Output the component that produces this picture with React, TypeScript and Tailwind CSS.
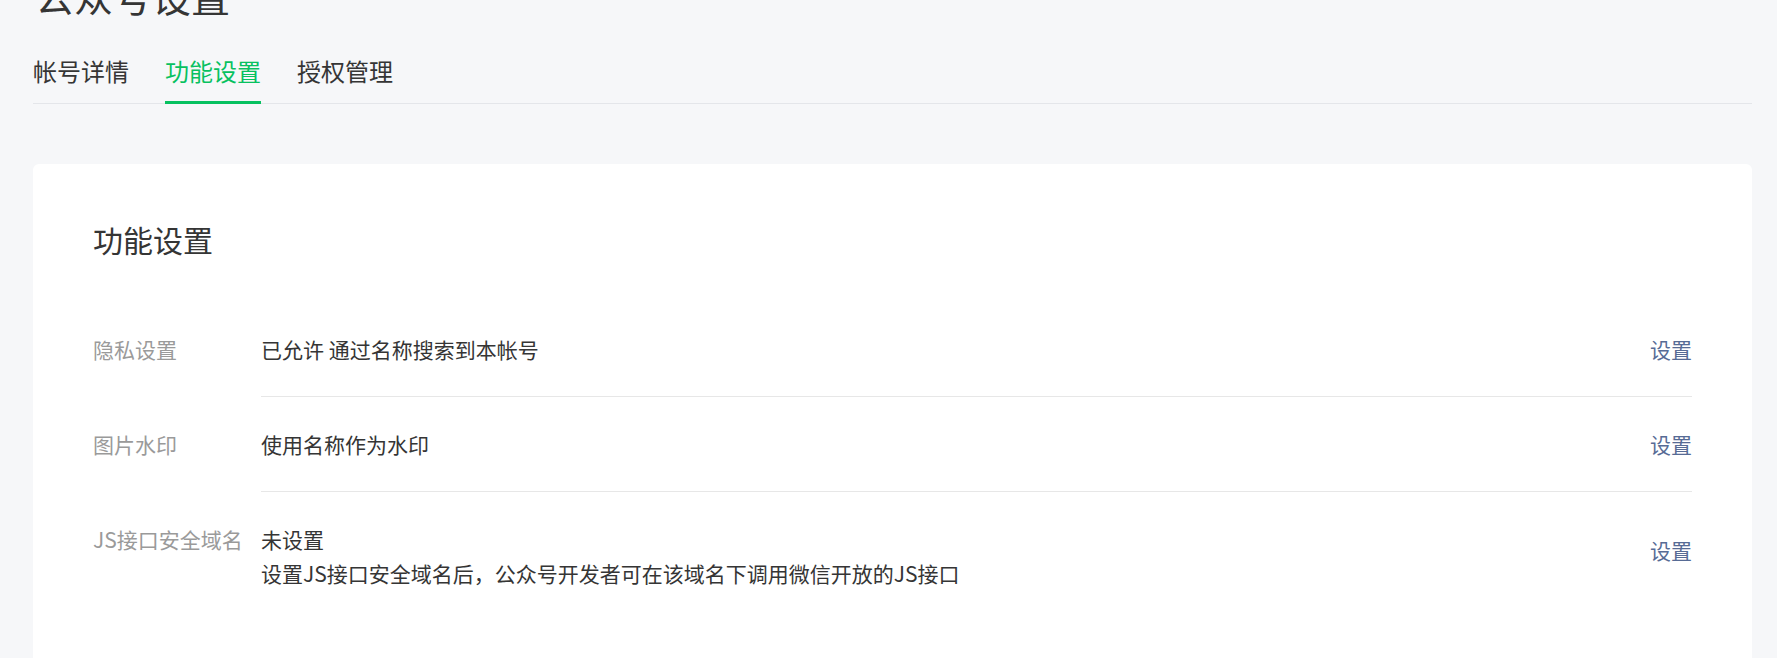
const tabs = ["帐号详情", "功能设置", "授权管理"];

const rows = [
  { label: "隐私设置", lines: ["已允许 通过名称搜索到本帐号"], linkOffset: "" },
  { label: "图片水印", lines: ["使用名称作为水印"], linkOffset: "" },
  {
    label: "JS接口安全域名",
    lines: ["未设置", "设置JS接口安全域名后，公众号开发者可在该域名下调用微信开放的JS接口"],
    linkOffset: "mt-[11px]",
  },
];

export default function App() {
  return (
    <div
      className="h-[658px] overflow-hidden bg-[#f6f7f9] pl-[33px] pr-[25px] text-[#353535]"
      style={{ fontFamily: '"Noto Sans CJK SC", "Noto Sans", sans-serif' }}
    >
      <h1 className="-mt-[24px] text-[39px] leading-[39px] font-normal pl-[2px]">公众号设置</h1>

      <div className="mt-[38px] flex gap-[36px] border-b border-[#e4e6ea]">
        {tabs.map((t, i) => (
          <div
            key={t}
            className={
              i === 1
                ? "-mb-px pb-[12px] border-b-[3px] border-[#07c160] text-[24px] leading-[36px] text-[#07c160]"
                : "-mb-px pb-[12px] border-b-[3px] border-transparent text-[24px] leading-[36px]"
            }
          >
            {t}
          </div>
        ))}
      </div>

      <div className="mt-[60px] rounded-[6px] bg-white px-[60px] pt-[55px] pb-[60px]">
        <h2 className="mb-[43px] text-[30px] leading-[40px] font-normal">功能设置</h2>

        {rows.map((r, i) => (
          <div key={r.label} className="flex">
            <div className="w-[168px] shrink-0 py-[30px] text-[21px] leading-[34px] text-[#9a9a9a]">{r.label}</div>
            <div
              className={
                i < rows.length - 1
                  ? "flex flex-1 items-start justify-between border-b border-[#e7e7e7] py-[30px]"
                  : "flex flex-1 items-start justify-between py-[30px]"
              }
            >
              <div className="text-[21px] leading-[34px]">
                {r.lines.map((l) => (
                  <div key={l}>{l}</div>
                ))}
              </div>
              <a className={`text-[21px] leading-[34px] text-[#576b95] ${r.linkOffset}`}>设置</a>
            </div>
          </div>
        ))}
      </div>
    </div>
  );
}
